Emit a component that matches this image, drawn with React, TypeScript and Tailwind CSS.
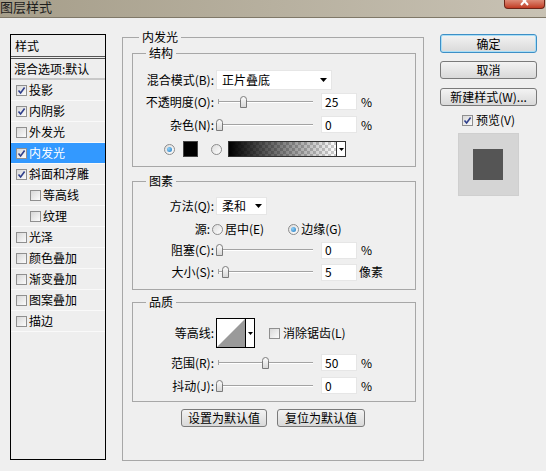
import React from 'react';

type Item = { label: string; checked?: boolean; indent?: boolean; active?: boolean };

const items: Item[] = [
  { label: '投影', checked: true },
  { label: '内阴影', checked: true },
  { label: '外发光' },
  { label: '内发光', checked: true, active: true },
  { label: '斜面和浮雕', checked: true },
  { label: '等高线', indent: true },
  { label: '纹理', indent: true },
  { label: '光泽' },
  { label: '颜色叠加' },
  { label: '渐变叠加' },
  { label: '图案叠加' },
  { label: '描边' },
];

function Check({ checked }: { checked?: boolean }) {
  return (
    <span className="w-[11px] h-[11px] shrink-0 border border-[#8f8f8f] bg-gradient-to-br from-[#d8d8d8] to-[#fbfbfb] flex items-center justify-center">
      {checked && (
        <svg width="9" height="9" viewBox="0 0 9 9">
          <path d="M1.5 4.5 L3.6 7 L7.6 1.6" fill="none" stroke="#2f3f8c" strokeWidth="1.6" />
        </svg>
      )}
    </span>
  );
}

function Radio({ on }: { on?: boolean }) {
  return (
    <span className="w-[11px] h-[11px] shrink-0 rounded-full border border-[#8c8c8c] bg-gradient-to-br from-[#dcdcdc] to-[#ffffff] flex items-center justify-center">
      {on && <span className="w-[5px] h-[5px] rounded-full bg-[radial-gradient(circle_at_35%_35%,#8fd0f7,#1f78c0)]" />}
    </span>
  );
}

function Arrow() {
  return (
    <svg width="7" height="4" viewBox="0 0 7 4">
      <path d="M0 0 H7 L3.5 4 Z" fill="#000" />
    </svg>
  );
}

function Slider({ at }: { at: number }) {
  return (
    <div className="relative w-[100px] h-[12px] shrink-0">
      <div className="absolute left-[2px] right-[3px] top-[5px] h-[2px] border-t border-[#a3a3a3] border-b border-b-white" />
      <div className="absolute left-[2px] top-[3px] w-px h-[5px] bg-[#a3a3a3]" />
      <svg className="absolute top-0" style={{ left: at }} width="7" height="12" viewBox="0 0 7 12">
        <defs>
          <linearGradient id="th" x1="0" y1="0" x2="0" y2="1">
            <stop offset="0" stopColor="#fdfdfd" />
            <stop offset="1" stopColor="#d6d6d6" />
          </linearGradient>
        </defs>
        <path d="M0.5 3.5 Q0.5 0.5 3.5 0.5 Q6.5 0.5 6.5 3.5 V11.5 H0.5 Z" fill="url(#th)" stroke="#7a7a7a" />
      </svg>
    </div>
  );
}

function Field({ value }: { value: string }) {
  return (
    <div className="w-[36px] h-[17px] ml-[5px] bg-white border border-[#e6e6e6] pl-[3px] flex items-center leading-none">
      {value}
    </div>
  );
}

function Row({ label, lw = 'w-[81px]', className = '', children }: { label: string; lw?: string; className?: string; children: React.ReactNode }) {
  return (
    <div className={`flex items-center ${className}`}>
      <span className={`${lw} shrink-0 text-right whitespace-nowrap leading-none`}>{label}</span>
      <div className="ml-[2px] flex items-center">{children}</div>
    </div>
  );
}

function Group({ title, legendMl, className = '', children }: { title: string; legendMl: string; className?: string; children: React.ReactNode }) {
  return (
    <fieldset className={`border border-[#a7a7a7] m-0 p-0 min-w-0 ${className}`}>
      <legend className={`${legendMl} px-[3px] leading-[14px]`}>{title}</legend>
      {children}
    </fieldset>
  );
}

function Btn({ children, primary, className = '' }: { children: React.ReactNode; primary?: boolean; className?: string }) {
  return (
    <div
      className={`flex items-center justify-center rounded-[3px] border bg-gradient-to-b from-[#f3f3f3] to-[#d9d9d9] leading-none ${
        primary ? 'border-[#3d8fc6] shadow-[inset_0_0_0_1px_#a9def6]' : 'border-[#7a7a7a]'
      } ${className}`}
    >
      {children}
    </div>
  );
}

export default function App() {
  return (
    <div className="w-[546px] h-[471px] overflow-hidden bg-[#efefef] text-[12px] text-black font-['Noto_Sans_CJK_SC',sans-serif] flex flex-col">
      {/* 标题栏 */}
      <div className="h-[18px] shrink-0 flex justify-between bg-gradient-to-r from-[#a69e8a] via-[#b7b09f] to-[#c8c2b4] border-b border-[#7f7868]">
        <div className="text-[13px] leading-[14px] text-[#1d1d1d]">图层样式</div>
        <div className="w-[41px] h-[9px] mr-[1px] rounded-b-[4px] border border-t-0 border-[#6e2417] bg-gradient-to-b from-[#dc8a76] to-[#c13a22] flex justify-center overflow-hidden">
          <svg width="9" height="8" viewBox="0 0 9 8">
            <path d="M1 -3 L8 5 M8 -3 L1 5" stroke="#fff" strokeWidth="2" />
          </svg>
        </div>
      </div>

      <div className="flex items-start pl-[10px] pt-[12px]">
        {/* 样式列表 */}
        <div className="mt-[4px] w-[96px] h-[426px] shrink-0 border border-black bg-[#eeeeee] flex flex-col">
          <div className="h-[24px] border-b-[3px] border-double border-[#555] pl-[4px] flex items-center">样式</div>
          <div className="h-[21px] border-b-2 border-[#c8c8c8] pl-[3px] flex items-center whitespace-nowrap">混合选项:默认</div>
          {items.map((it) => (
            <div
              key={it.label}
              className={`h-[21px] border-b border-[#f9f9f9] flex items-center gap-[2px] ${it.indent ? 'pl-[19px]' : 'pl-[5px]'} ${
                it.active ? 'bg-[#3399ff] text-white' : ''
              }`}
            >
              <Check checked={it.checked} />
              <span className="leading-none">{it.label}</span>
            </div>
          ))}
        </div>

        {/* 内发光 */}
        <Group title="内发光" legendMl="ml-[16px]" className="ml-[16px] w-[302px] h-[431px] shrink-0">
          <Group title="结构" legendMl="ml-[13px]" className="mt-[2px] ml-[9px] w-[284px] pt-[10px] pb-[9px]">
            <Row label="混合模式(B):" className="h-[20px]">
              <div className="w-[116px] h-[20px] bg-white border border-[#e6e6e6] pl-[5px] pr-[4px] flex items-center justify-between">
                <span className="leading-none">正片叠底</span>
                <Arrow />
              </div>
            </Row>
            <Row label="不透明度(O):" className="h-[17px] mt-[3px]">
              <Slider at={24} />
              <Field value="25" />
              <span className="ml-[4px] leading-none">%</span>
            </Row>
            <Row label="杂色(N):" className="h-[17px] mt-[6px]">
              <Slider at={0} />
              <Field value="0" />
              <span className="ml-[4px] leading-none">%</span>
            </Row>
            <div className="h-[16px] mt-[8px] pl-[31px] flex items-center">
              <Radio on />
              <div className="ml-[8px] w-[15px] h-[16px] bg-black border border-[#444]" />
              <div className="ml-[13px]">
                <Radio />
              </div>
              <div className="ml-[6px] w-[118px] h-[16px] border border-[#333] flex">
                <div className="flex-1 bg-[repeating-conic-gradient(#cfcfcf_0_25%,#ffffff_0_50%)] bg-[length:6px_6px]">
                  <div className="w-full h-full bg-gradient-to-r from-black to-transparent" />
                </div>
                <div className="w-[9px] border-l border-[#333] bg-white flex items-center justify-center">
                  <svg width="5" height="3" viewBox="0 0 5 3">
                    <path d="M0 0 H5 L2.5 3 Z" fill="#000" />
                  </svg>
                </div>
              </div>
            </div>
          </Group>

          <Group title="图素" legendMl="ml-[13px]" className="mt-[7px] ml-[9px] w-[284px] pt-[9px] pb-[8px]">
            <Row label="方法(Q):" className="h-[18px]">
              <div className="w-[51px] h-[18px] bg-white border border-[#e6e6e6] pl-[5px] pr-[4px] flex items-center justify-between">
                <span className="leading-none">柔和</span>
                <Arrow />
              </div>
            </Row>
            <Row label="源:" lw="w-[77px]" className="h-[14px] mt-[7px]">
              <Radio />
              <span className="ml-[2px] leading-none">居中(E)</span>
              <div className="ml-[24px]">
                <Radio on />
              </div>
              <span className="ml-[2px] leading-none">边缘(G)</span>
            </Row>
            <Row label="阻塞(C):" className="h-[18px] mt-[5px]">
              <Slider at={0} />
              <Field value="0" />
              <span className="ml-[4px] leading-none">%</span>
            </Row>
            <Row label="大小(S):" className="h-[18px] mt-[4px]">
              <Slider at={6} />
              <Field value="5" />
              <span className="ml-[2px] leading-none">像素</span>
            </Row>
          </Group>

          <Group title="品质" legendMl="ml-[13px]" className="mt-[5px] ml-[9px] w-[284px] pt-[9px] pb-[7px]">
            <Row label="等高线:" className="h-[30px]">
              <div className="w-[39px] h-[30px] border border-black flex bg-white">
                <svg className="flex-1" width="28" height="28" viewBox="0 0 28 28" preserveAspectRatio="none">
                  <path d="M0 28 L28 0 V28 Z" fill="#9a9a9a" />
                </svg>
                <div className="w-[9px] border-l border-black flex items-center justify-center">
                  <svg width="5" height="3" viewBox="0 0 5 3">
                    <path d="M0 0 H5 L2.5 3 Z" fill="#000" />
                  </svg>
                </div>
              </div>
              <div className="ml-[14px]">
                <Check />
              </div>
              <span className="ml-[3px] leading-none">消除锯齿(L)</span>
            </Row>
            <Row label="范围(R):" className="h-[17px] mt-[6px]">
              <Slider at={46} />
              <Field value="50" />
              <span className="ml-[4px] leading-none">%</span>
            </Row>
            <Row label="抖动(J):" className="h-[17px] mt-[6px]">
              <Slider at={0} />
              <Field value="0" />
              <span className="ml-[4px] leading-none">%</span>
            </Row>
          </Group>

          <div className="mt-[7px] ml-[58px] flex gap-[10px]">
            <Btn className="w-[86px] h-[18px]">设置为默认值</Btn>
            <Btn className="w-[88px] h-[18px]">复位为默认值</Btn>
          </div>
        </Group>

        {/* 右侧按钮 */}
        <div className="ml-[16px] mt-[4px] w-[97px] shrink-0 flex flex-col">
          <Btn primary className="h-[19px]">确定</Btn>
          <Btn className="h-[18px] mt-[8px]">取消</Btn>
          <Btn className="h-[18px] mt-[9px] whitespace-nowrap">新建样式(W)...</Btn>
          <div className="mt-[8px] h-[12px] flex items-center justify-center gap-[3px]">
            <Check checked />
            <span className="leading-none">预览(V)</span>
          </div>
          <div className="mt-[7px] self-center ml-[-1px] w-[61px] h-[63px] bg-[#d5d5d5] border border-[#cfcfcf] flex items-center justify-center">
            <div className="w-[30px] h-[31px] bg-[#555555]" />
          </div>
        </div>
      </div>
    </div>
  );
}
